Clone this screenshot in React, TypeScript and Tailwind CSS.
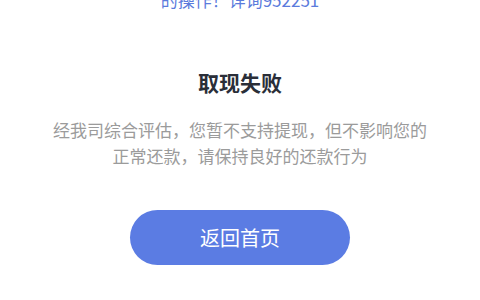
export default function App() {
  return (
    <div
      className="w-[480px] h-[300px] overflow-hidden bg-white flex flex-col items-center"
      style={{ fontFamily: '"Noto Sans CJK SC", "Noto Sans", sans-serif' }}
    >
      <div className="mt-[-12px] text-[17px] leading-[24px] text-[#5b7bdc]">的操作！详询952251</div>
      <div className="mt-[56px] text-[21px] leading-[28px] font-bold text-[#2a2e38]">取现失败</div>
      <div className="mt-[21px] text-[17px] leading-[26px] text-[#9b9b9b] text-center">
        <div>经我司综合评估，您暂不支持提现，但不影响您的</div>
        <div>正常还款，请保持良好的还款行为</div>
      </div>
      <button className="mt-[41px] w-[220px] h-[55px] rounded-full bg-[#5b7ce3] text-white text-[20px] flex items-center justify-center">
        返回首页
      </button>
    </div>
  );
}
